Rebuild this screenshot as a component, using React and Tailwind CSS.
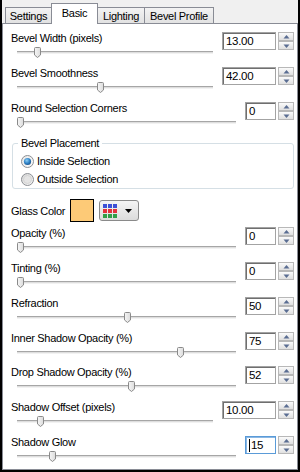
import React from "react";

function Thumb() {
  return (
    <svg width="7" height="11" viewBox="0 0 7 11">
      <defs>
        <linearGradient id="tg" x1="0" y1="0" x2="1" y2="0">
          <stop offset="0" stopColor="#f6f6f6" />
          <stop offset="1" stopColor="#dcdcdc" />
        </linearGradient>
      </defs>
      <path d="M0.5 1.5 Q0.5 0.5 1.5 0.5 H5.5 Q6.5 0.5 6.5 1.5 V8 L3.5 10.5 L0.5 8 Z" fill="url(#tg)" stroke="#8a8a8a" />
    </svg>
  );
}

function Slider({ pos }) {
  return (
    <div className="relative h-[14px] ml-[6px] mr-[9px] flex items-center">
      <div className="h-[3px] w-full border-t border-t-[#a6a6a6] bg-[#dedede] border-b border-b-[#f2f2f2]" />
      <div className="absolute top-[2px] flex" style={{ left: pos - 3 }}>
        <Thumb />
      </div>
    </div>
  );
}

function Spin() {
  return (
    <div className="flex flex-col w-[16px] h-[18px]">
      <div className="h-[9px] border border-[#b8b8b8] bg-linear-to-b from-[#fbfbfb] to-[#e0e0e0] flex items-center justify-center">
        <svg width="7" height="4" viewBox="0 0 7 4">
          <path d="M3.5 0L6.5 3.5H0.5Z" fill="#5a6d92" />
        </svg>
      </div>
      <div className="h-[9px] border border-[#b8b8b8] bg-linear-to-b from-[#fbfbfb] to-[#e0e0e0] flex items-center justify-center">
        <svg width="7" height="4" viewBox="0 0 7 4">
          <path d="M0.5 0.5H6.5L3.5 4Z" fill="#5a6d92" />
        </svg>
      </div>
    </div>
  );
}

function NumBox({ value, wide, focused }) {
  return (
    <div className="flex gap-[2px] mt-[2px]">
      <div
        className={
          (wide ? "w-[54px] " : "w-[31px] ") +
          (focused
            ? "border-[#5a9bd8] shadow-[inset_1px_1px_0_#8bb8e4] "
            : "border-[#a3a3a3] shadow-[inset_1px_1px_0_#6f6f6f] ") +
          "h-[18px] border bg-white flex items-center pl-[3px] text-[11.5px] leading-[14px] text-black"
        }
      >
        {focused && <span className="w-px h-[13px] bg-black mr-px" />}
        {value}
      </div>
      <Spin />
    </div>
  );
}

function Row({ label, value, wide, pos, h, focused }) {
  return (
    <div className={(h === 34 ? "h-[34px]" : "h-[35px]") + " flex items-start"}>
      <div className="flex-1 flex flex-col">
        <div className="h-[14px] mt-[1px] leading-[14px] whitespace-nowrap">{label}</div>
        <Slider pos={pos} />
      </div>
      <NumBox value={value} wide={wide} focused={focused} />
    </div>
  );
}

function RadioOn() {
  return (
    <svg width="13" height="13" viewBox="0 0 13 13">
      <defs>
        <linearGradient id="ro" x1="0" y1="0" x2="1" y2="1">
          <stop offset="0" stopColor="#e8e8e8" />
          <stop offset="1" stopColor="#fafafa" />
        </linearGradient>
        <radialGradient id="rd" cx="0.4" cy="0.35" r="0.7">
          <stop offset="0" stopColor="#8fd0f6" />
          <stop offset="0.6" stopColor="#2b7fc4" />
          <stop offset="1" stopColor="#1b4f86" />
        </radialGradient>
      </defs>
      <circle cx="6.5" cy="6.5" r="6" fill="url(#ro)" stroke="#8c8f94" />
      <circle cx="6.5" cy="6.5" r="3.6" fill="url(#rd)" />
    </svg>
  );
}

function RadioOff() {
  return (
    <svg width="13" height="13" viewBox="0 0 13 13">
      <defs>
        <linearGradient id="rf" x1="0" y1="0" x2="1" y2="1">
          <stop offset="0" stopColor="#d6d6d6" />
          <stop offset="1" stopColor="#f7f7f7" />
        </linearGradient>
      </defs>
      <circle cx="6.5" cy="6.5" r="6" fill="url(#rf)" stroke="#8c8f94" />
      <circle cx="6.5" cy="6.5" r="4" fill="#e4e4e4" stroke="#cfcfcf" strokeWidth="0.8" />
    </svg>
  );
}

const top = [
  { label: "Bevel Width (pixels)", value: "13.00", wide: true, pos: 20 },
  { label: "Bevel Smoothness", value: "42.00", wide: true, pos: 83 },
  { label: "Round Selection Corners", value: "0", pos: 3 },
];

const bottom = [
  { label: "Opacity (%)", value: "0", pos: 3 },
  { label: "Tinting (%)", value: "0", pos: 3 },
  { label: "Refraction", value: "50", pos: 110 },
  { label: "Inner Shadow Opacity (%)", value: "75", pos: 163, h: 34 },
  { label: "Drop Shadow Opacity (%)", value: "52", pos: 114 },
  { label: "Shadow Offset (pixels)", value: "10.00", wide: true, pos: 23 },
  { label: "Shadow Glow", value: "15", pos: 35, focused: true },
];

const gridColors = [
  "bg-[#3b4fd6]", "bg-[#3b4fd6]", "bg-[#3b4fd6]",
  "bg-[#e2323c]", "bg-[#e2323c]", "bg-[#e2323c]",
  "bg-[#2f9e47]", "bg-[#2f9e47]", "bg-[#2f9e47]",
];

export default function App() {
  return (
    <div className="w-[300px] h-[472px] bg-[#f0f0f0] border-l-2 border-r-2 border-b-2 border-black flex flex-col font-['Liberation_Sans',Arial,sans-serif] text-[11px] tracking-[-0.3px] text-black">
      <div className="h-[23px] flex items-end pl-[3px] shrink-0">
        <div className="w-[47px] h-[16px] border border-b-0 border-[#898c95] bg-linear-to-b from-[#f3f3f3] to-[#e2e2e2] flex items-center justify-center leading-[14px]">
          Settings
        </div>
        <div className="w-[47px] h-[21px] -ml-px -mb-px relative z-10 border border-b-0 border-[#898c95] bg-white flex items-center justify-center leading-[14px] pb-[2px]">
          Basic
        </div>
        <div className="w-[48px] h-[16px] -ml-px border border-b-0 border-[#898c95] bg-linear-to-b from-[#f3f3f3] to-[#e2e2e2] flex items-center justify-center leading-[14px]">
          Lighting
        </div>
        <div className="w-[70px] h-[16px] -ml-px border border-b-0 border-[#898c95] bg-linear-to-b from-[#f3f3f3] to-[#e2e2e2] flex items-center justify-center leading-[14px]">
          Bevel Profile
        </div>
      </div>
      <div className="flex-1 border border-[#898c95] bg-white pt-[6px] pl-[8px] pr-[3px] flex flex-col">
        {top.map((r) => (
          <Row key={r.label} {...r} />
        ))}
        <div className="h-[55px] pt-[8px] pl-[1px]">
          <div className="h-[46px] border border-[#d5dfe5] rounded-[3px] flex flex-col">
            <div className="h-[14px] -mt-[8px] ml-[5px] px-[3px] bg-white w-fit leading-[14px]">
              Bevel Placement
            </div>
            <div className="h-[18px] mt-[2px] flex items-center pl-[8px] gap-[3px]">
              <RadioOn />
              <span className="leading-[14px]">Inside Selection</span>
            </div>
            <div className="h-[18px] flex items-center pl-[8px] gap-[3px]">
              <RadioOff />
              <span className="leading-[14px]">Outside Selection</span>
            </div>
          </div>
        </div>
        <div className="h-[35px] pt-[6px] flex items-center">
          <div className="w-[59px] leading-[14px] whitespace-nowrap">Glass Color</div>
          <div className="w-[24px] h-[23px] border border-black bg-[#fdca77]" />
          <div className="ml-[5px] w-[40px] h-[21px] rounded-[3px] border border-[#8a8a8a] bg-linear-to-b from-[#f4f4f4] to-[#dcdcdc] flex items-center pl-[3px]">
            <div className="grid grid-cols-3 gap-px w-[14px]">
              {gridColors.map((c, i) => (
                <div key={i} className={c + " w-[4px] h-[4px]"} />
              ))}
            </div>
            <svg className="ml-[8px]" width="7" height="4" viewBox="0 0 7 4">
              <path d="M0 0H7L3.5 4Z" fill="#000" />
            </svg>
          </div>
        </div>
        {bottom.map((r) => (
          <Row key={r.label} {...r} />
        ))}
      </div>
    </div>
  );
}
